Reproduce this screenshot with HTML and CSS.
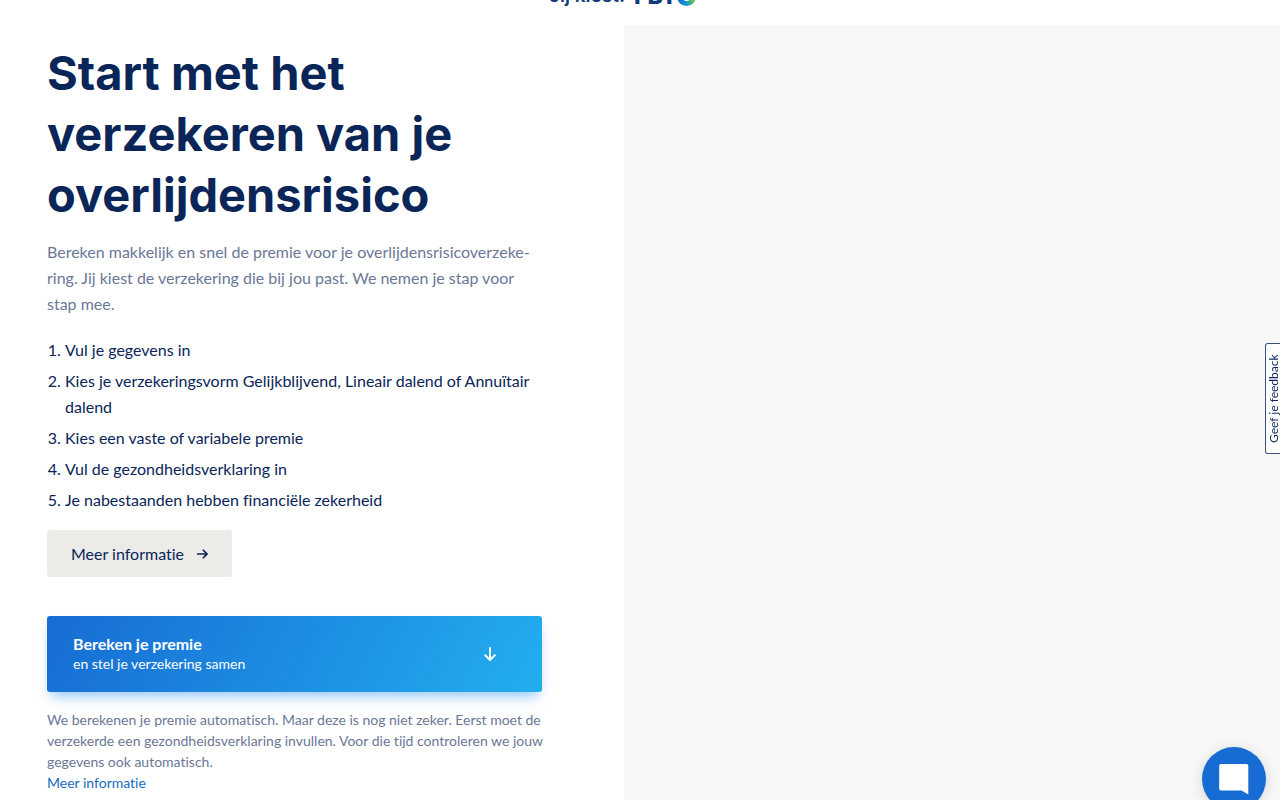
FILE: index.html
```
<!DOCTYPE html>
<html lang="nl">
<head>
    <meta charset="UTF-8">
    <meta name="viewport" content="width=device-width, initial-scale=1.0">
    <title>Overlijdensrisicoverzekering - FBTO</title>
    <link rel="stylesheet" href="styles.css">
</head>
<body>
    <header class="header">
        <a href="#" class="logo">
            <span class="logo-slogan">Jij kiest.</span>
            <span class="logo-name">FBT</span>
            <span class="logo-ring"></span>
        </a>
    </header>

    <main class="hero">
        <section class="content">
            <h1>Start met het verzekeren van je overlijdensrisico</h1>
            <p class="intro">Bereken makkelijk en snel de premie voor je overlijdensrisicoverzeke&shy;ring. Jij kiest de verzekering die bij jou past. We nemen je stap voor stap mee.</p>

            <ol class="steps">
                <li>Vul je gegevens in</li>
                <li>Kies je verzekeringsvorm Gelijkblijvend, Lineair dalend of Annuïtair dalend</li>
                <li>Kies een vaste of variabele premie</li>
                <li>Vul de gezondheidsverklaring in</li>
                <li>Je nabestaanden hebben financiële zekerheid</li>
            </ol>

            <a href="#" class="btn-info">
                Meer informatie
                <svg width="12" height="12" viewBox="0 0 12 12" fill="none" stroke="currentColor" stroke-width="1.6">
                    <path d="M1 6h9.5M6.8 1.8 11 6l-4.2 4.2"/>
                </svg>
            </a>

            <button type="button" class="btn-premie">
                <span class="btn-text">
                    <strong>Bereken je premie</strong>
                    <span>en stel je verzekering samen</span>
                </span>
                <svg width="12" height="14" viewBox="0 0 12 14" fill="none" stroke="currentColor" stroke-width="2" stroke-linecap="round" stroke-linejoin="round">
                    <path d="M6 1v12M1.2 8.2 6 13l4.8-4.8"/>
                </svg>
            </button>

            <p class="note">We berekenen je premie automatisch. Maar deze is nog niet zeker. Eerst moet de verzekerde een gezondheidsverklaring invullen. Voor die tijd controleren we jouw gegevens ook automatisch.</p>
            <a href="#" class="note-link">Meer informatie</a>
        </section>

        <div class="visual"></div>
    </main>

    <button type="button" class="feedback">Geef je feedback</button>

    <button type="button" class="chat" aria-label="Chat">
        <svg width="30" height="31" viewBox="0 0 30 31" fill="#fff">
            <path d="M2 0h25.500A1.800 1.800 0 0 1 29.300 1.800V30.500L22.500 26.500H2A1.800 1.800 0 0 1 .2 24.700V1.800A1.800 1.800 0 0 1 2 0z"/>
        </svg>
    </button>
</body>
</html>
```
FILE: styles.css
```
* {
    box-sizing: border-box;
}
body {
    margin: 0;
    height: 100vh;
    overflow: hidden;
    display: flex;
    flex-direction: column;
    font-family: Lato, "Open Sans", sans-serif;
    font-size: 16px;
    font-variant-ligatures: none;
    color: #0a2558;
    background: #fff;
}
a {
    text-decoration: none;
}
button {
    border: none;
    font-family: inherit;
    cursor: pointer;
}

/* top bar, logo is partly scrolled out of view */
.header {
    flex: none;
    height: 25px;
    padding-bottom: 15px;
    overflow: hidden;
    display: flex;
    justify-content: center;
    align-items: flex-end;
}
.logo {
    display: flex;
    align-items: center;
    margin-right: 35px;
    font-family: Inter, sans-serif;
    line-height: 28px;
    color: #0f3a7d;
}
.logo-slogan {
    margin-right: 9px;
    font-size: 19px;
    font-weight: 600;
}
.logo-name {
    font-size: 23px;
    font-weight: 800;
}
.logo-ring {
    width: 19px;
    height: 19px;
    border-radius: 50%;
    background:
        radial-gradient(circle, #fff 4px, transparent 5px),
        conic-gradient(#8cc63f, #a5cd39 100deg, #2fae8f 150deg, #1490d8 190deg, #1565c0 270deg, #8cc63f);
}

.hero {
    flex: 1;
    display: grid;
    grid-template-columns: 39fr 41fr;
}
.content {
    padding: 17px 82px 0 47px;
}
.visual {
    background: #f8f8f8;
}
h1 {
    margin: 0 0 14px;
    font-family: Inter, sans-serif;
    font-size: 47px;
    font-weight: 700;
    line-height: 61px;
}
.intro {
    margin: 0 0 20px;
    line-height: 26px;
    color: #6b7797;
}
.steps {
    margin: 0 0 17px;
    padding-left: 18px;
    line-height: 26px;
}
.steps li {
    margin-bottom: 5px;
}
.btn-info {
    display: flex;
    align-items: center;
    justify-content: space-between;
    width: 185px;
    height: 47px;
    padding: 0 24px;
    border-radius: 3px;
    background: #ecebe8;
    color: #0a2558;
}
.btn-premie {
    display: flex;
    align-items: center;
    justify-content: space-between;
    width: 100%;
    height: 76px;
    margin: 39px 0 17px;
    padding: 0 46px 0 26px;
    border-radius: 3px;
    background: linear-gradient(118deg, #176cd3, #22aeef);
    box-shadow: 0 8px 12px -4px rgba(40, 140, 240, 0.5);
    color: #fff;
    text-align: left;
}
.btn-text {
    display: flex;
    flex-direction: column;
    font-size: 14px;
    line-height: 20px;
}
.btn-text strong {
    font-size: 16px;
    font-weight: 700;
}
.note {
    margin: 0 -12px 0 0;
    font-size: 14px;
    line-height: 21px;
    color: #6b7797;
}
.note-link {
    font-size: 14px;
    line-height: 21px;
    color: #176cc1;
}

.feedback {
    position: fixed;
    right: 0;
    top: 343px;
    width: 15px;
    height: 111px;
    padding: 0;
    border: 1px solid #3b517c;
    border-left: none;
    border-radius: 0 3px 3px 0;
    background: #fff;
    color: #0a2558;
    font-size: 12px;
    line-height: 16px;
    writing-mode: vertical-rl;
    transform: rotate(180deg);
}
.chat {
    position: fixed;
    right: 14px;
    bottom: -11px;
    display: flex;
    align-items: center;
    justify-content: center;
    width: 64px;
    height: 64px;
    padding: 0;
    border-radius: 50%;
    background: #176cd3;
    box-shadow: 0 2px 14px rgba(0, 0, 0, 0.15);
}
```
